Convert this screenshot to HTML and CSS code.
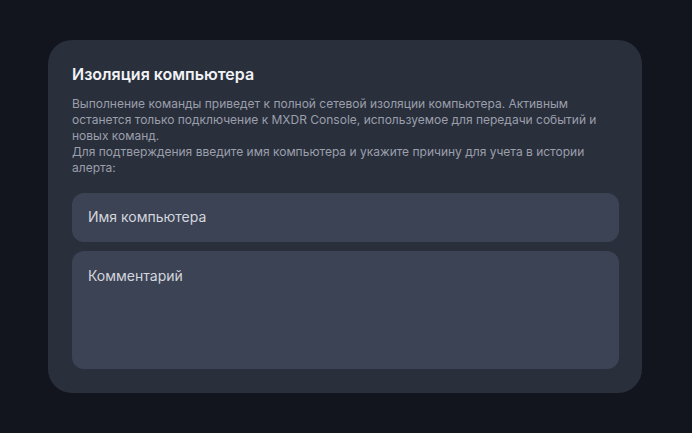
FILE: index.html
```html
<!DOCTYPE html>
<html lang="ru">
<head>
<meta charset="utf-8">
<link rel="stylesheet" href="styles.css">
</head>
<body>
<div class="page">
  <div class="card">
    <h2 class="title">Изоляция компьютера</h2>
    <p class="desc">Выполнение команды приведет к полной сетевой изоляции компьютера. Активным останется только подключение к MXDR Console, используемое для передачи событий и новых команд.<br>Для подтверждения введите имя компьютера и укажите причину для учета в истории алерта:</p>
    <div class="field input">Имя компьютера</div>
    <div class="field textarea">Комментарий</div>
  </div>
</div>
</body>
</html>
```
FILE: styles.css
```css
html, body {
  margin: 0;
  padding: 0;
  background: #12151d;
  font-family: Inter, "Noto Sans", sans-serif;
}
.page {
  padding: 40px 50px 40px 48px;
}
.card {
  width: 594px;
  box-sizing: border-box;
  background: #2a2f3c;
  border-radius: 24px;
  padding: 24px 23px 24px 24px;
  display: flex;
  flex-direction: column;
}
.title {
  margin: 0;
  font-size: 16px;
  line-height: 20px;
  font-weight: 600;
  color: #f1f3f6;
}
.desc {
  margin: 12px 0 17px;
  font-size: 12px;
  line-height: 16px;
  color: #9a9fab;
}
.field {
  background: #3c4355;
  border-radius: 12px;
  color: #d3d6dd;
  font-size: 14px;
  line-height: 20px;
  padding: 14px 16px 15px;
}
.textarea {
  margin-top: 9px;
  height: 118px;
  box-sizing: border-box;
  padding-top: 15px;
}
```
